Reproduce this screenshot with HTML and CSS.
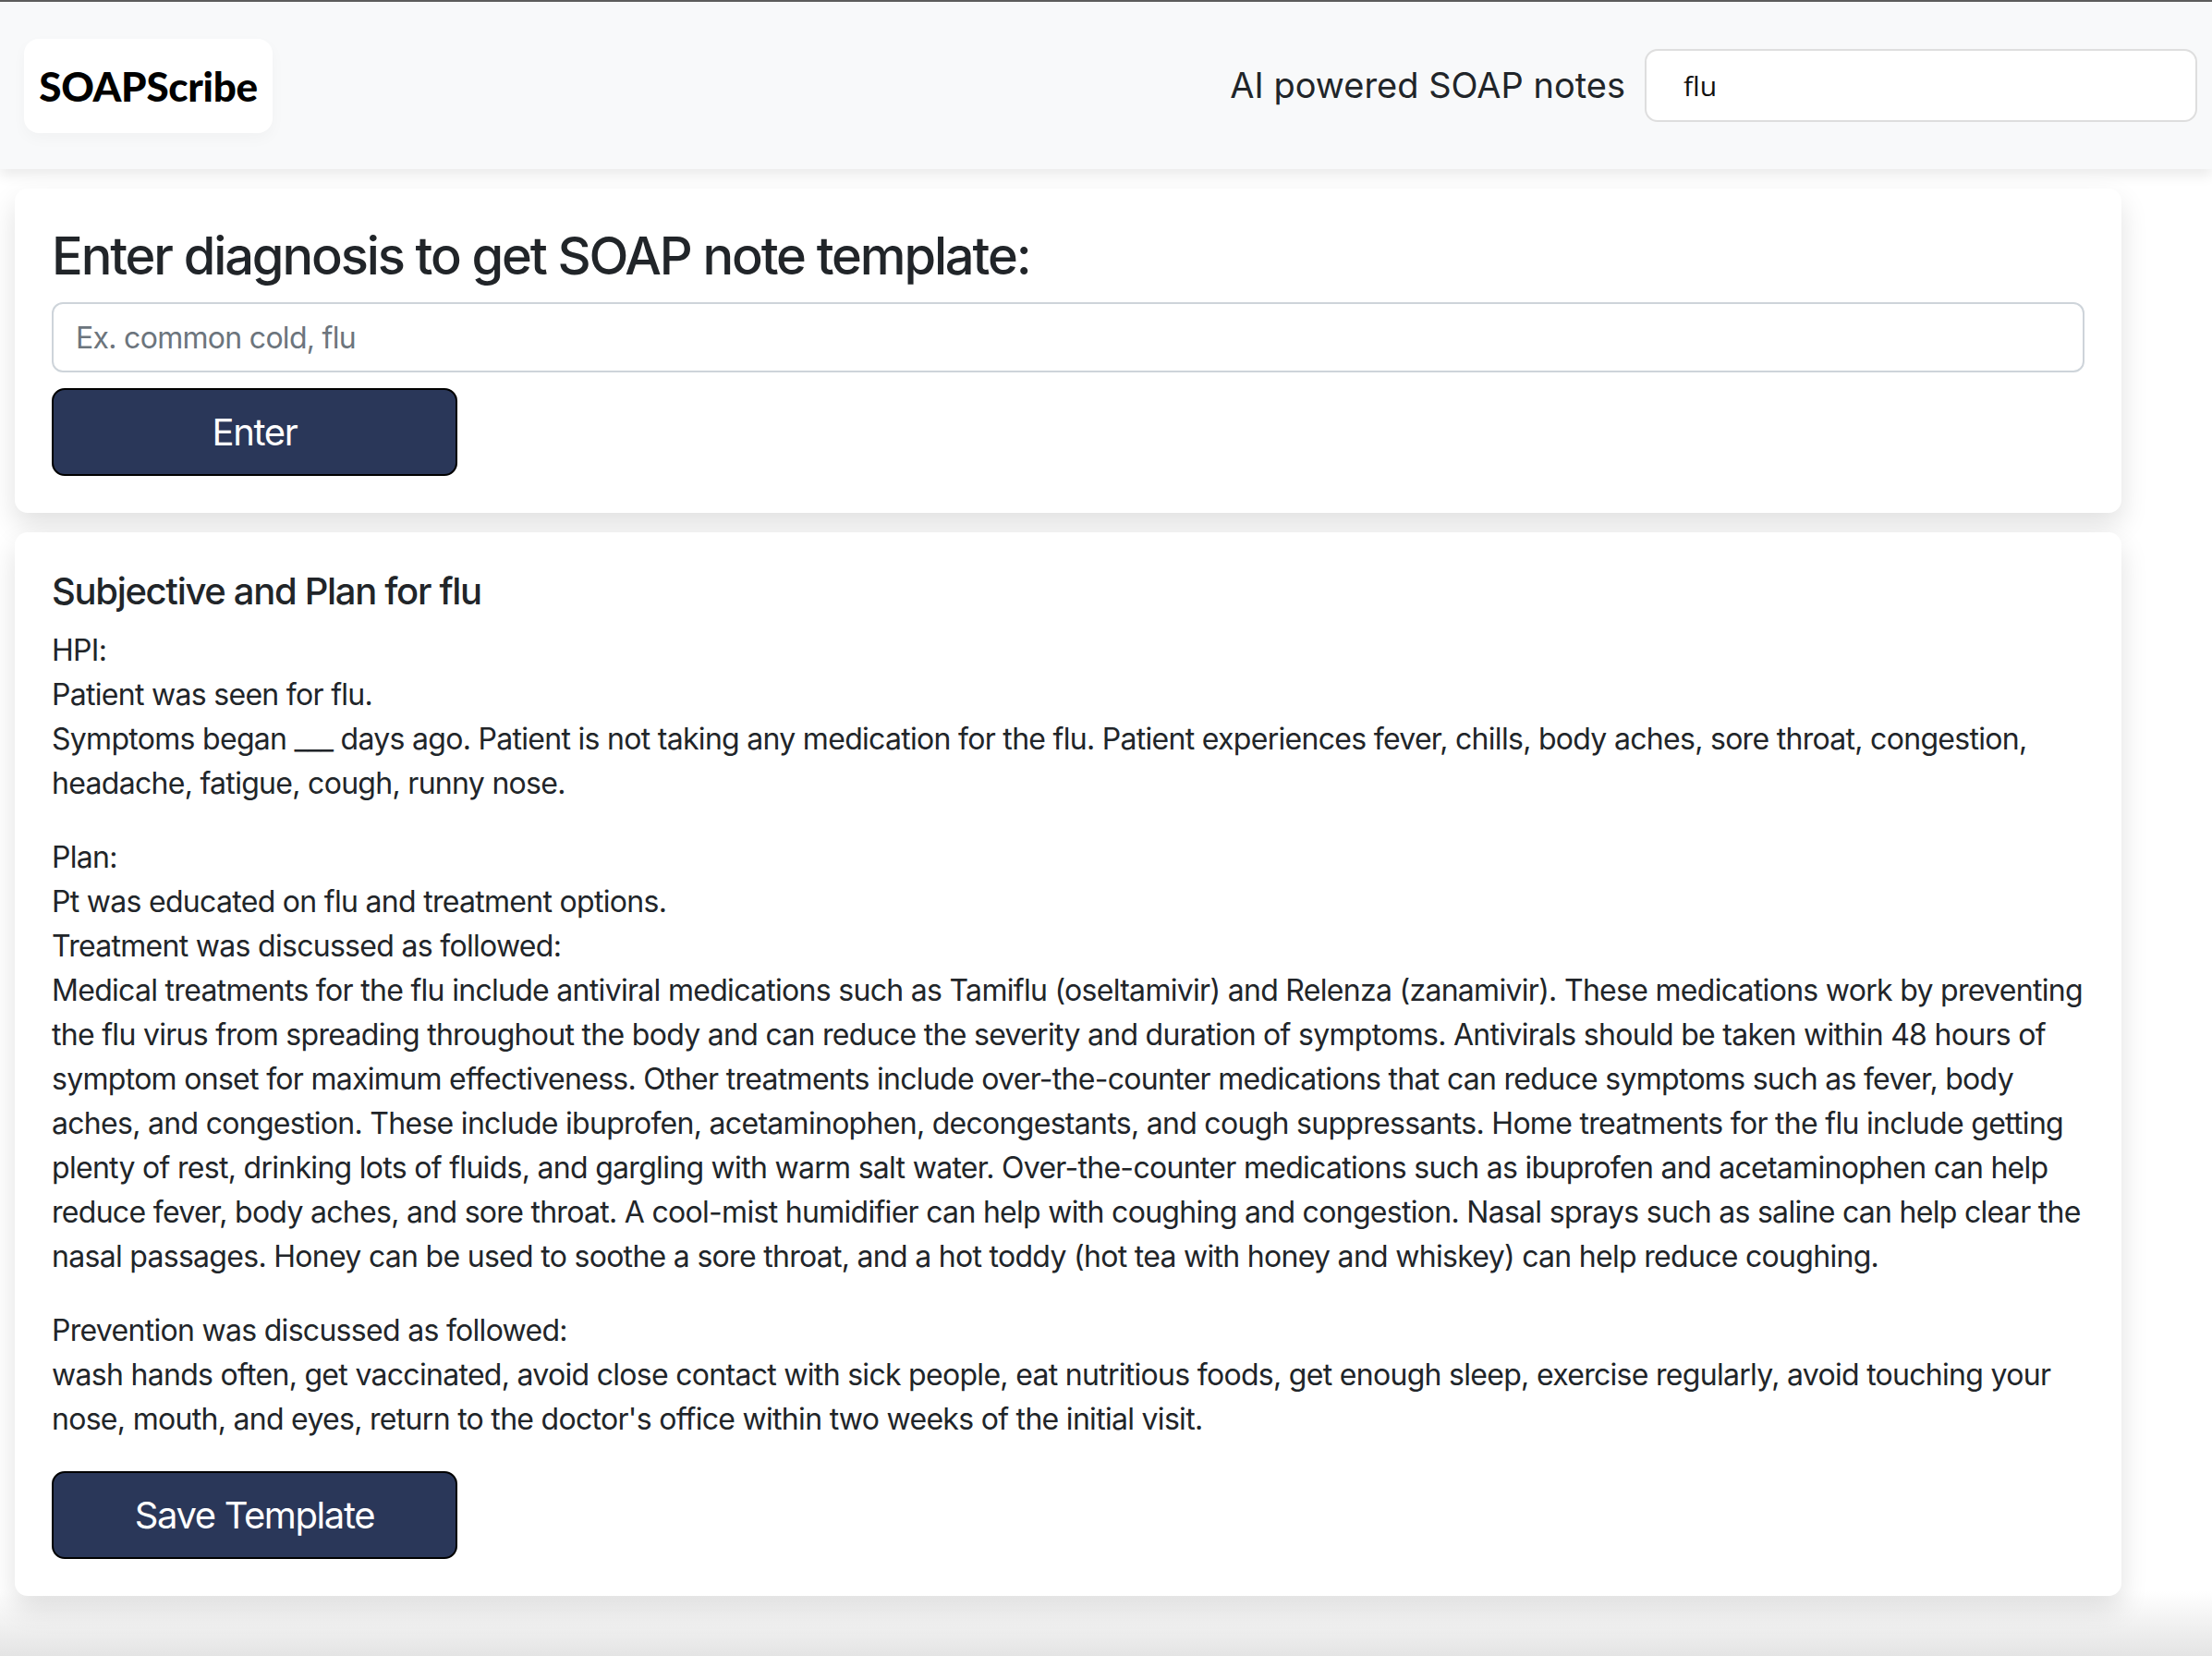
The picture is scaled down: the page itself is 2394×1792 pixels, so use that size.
FILE: index.html
```html
<!DOCTYPE html>
<html lang="en">
<head>
<meta charset="utf-8">
<title>SOAPScribe</title>
<link rel="stylesheet" href="styles.css">
</head>
<body>
<nav class="navbar">
  <div class="brand">SOAPScribe</div>
  <div class="nav-right">
    <span class="tagline">AI powered SOAP notes</span>
    <input class="nav-search" type="text" value="flu">
  </div>
</nav>
<main class="main">
  <section class="card">
    <h3 class="card-title-lg">Enter diagnosis to get SOAP note template:</h3>
    <input class="form-control" type="text" placeholder="Ex. common cold, flu">
    <button class="btn">Enter</button>
  </section>
  <section class="card">
    <h5 class="card-title">Subjective and Plan for flu</h5>
    <p>HPI:<br>Patient was seen for flu.<br>Symptoms began ___ days ago. Patient is not taking any medication for the flu. Patient experiences fever, chills, body aches, sore throat, congestion, headache, fatigue, cough, runny nose.</p>
    <p>Plan:<br>Pt was educated on flu and treatment options.<br>Treatment was discussed as followed:<br>Medical treatments for the flu include antiviral medications such as Tamiflu (oseltamivir) and Relenza (zanamivir). These medications work by preventing the flu virus from spreading throughout the body and can reduce the severity and duration of symptoms. Antivirals should be taken within 48 hours of symptom onset for maximum effectiveness. Other treatments include over-the-counter medications that can reduce symptoms such as fever, body aches, and congestion. These include ibuprofen, acetaminophen, decongestants, and cough suppressants. Home treatments for the flu include getting plenty of rest, drinking lots of fluids, and gargling with warm salt water. Over-the-counter medications such as ibuprofen and acetaminophen can help reduce fever, body aches, and sore throat. A cool-mist humidifier can help with coughing and congestion. Nasal sprays such as saline can help clear the nasal passages. Honey can be used to soothe a sore throat, and a hot toddy (hot tea with honey and whiskey) can help reduce coughing.</p>
    <p>Prevention was discussed as followed:<br>wash hands often, get vaccinated, avoid close contact with sick people, eat nutritious foods, get enough sleep, exercise regularly, avoid touching your nose, mouth, and eyes, return to the doctor's office within two weeks of the initial visit.</p>
    <button class="btn">Save Template</button>
  </section>
</main>
</body>
</html>
```

FILE: styles.css
```css
html {
  height: 100%;
}

body {
  margin: 0;
  min-height: 100%;
  font-family: Inter, "Noto Sans", "Liberation Sans", sans-serif;
  font-size: 32px;
  line-height: 1.5;
  letter-spacing: -0.022em;
  color: #212529;
  background: linear-gradient(to bottom, #ffffff 0, #ffffff calc(100% - 70px), #f3f3f3 calc(100% - 40px), #e4e4e4 100%);
}

.navbar {
  box-sizing: border-box;
  height: 183px;
  border-top: 2px solid #5c5c5c;
  background: #f8f9fa;
  display: flex;
  align-items: center;
  justify-content: space-between;
  padding: 0 16px 0 26px;
  box-shadow: 0 6px 14px rgba(0, 0, 0, 0.09);
  position: relative;
  z-index: 2;
}

.brand {
  width: 269px;
  height: 102px;
  background: #ffffff;
  border-radius: 16px;
  box-shadow: 0 6px 16px rgba(0, 0, 0, 0.03);
  display: flex;
  align-items: center;
  justify-content: center;
  font-family: Lato, "Liberation Sans", sans-serif;
  font-weight: 900;
  font-size: 44px;
  color: #000000;
  letter-spacing: -0.3px;
}

.nav-right {
  display: flex;
  align-items: center;
  gap: 21px;
}

.tagline {
  font-size: 38px;
  letter-spacing: 0;
  color: #212529;
}

.nav-search {
  box-sizing: border-box;
  width: 598px;
  height: 79px;
  border: 2px solid #dedede;
  border-radius: 14px;
  background: #ffffff;
  padding: 0 40px;
  font-family: "Open Sans", "Liberation Sans", sans-serif;
  font-size: 30px;
  letter-spacing: 0;
  color: #111111;
  outline: none;
}

.main {
  margin: 0 98px 0 16px;
  padding: 21px 0 0;
  display: flex;
  flex-direction: column;
  gap: 21px;
}

.card {
  background: #ffffff;
  border-radius: 14px;
  box-shadow: 0 14px 30px rgba(0, 0, 0, 0.12);
  padding: 40px;
}

.card-title-lg {
  margin: 0 0 16px;
  font-size: 56px;
  font-weight: 500;
  line-height: 1.2;
  letter-spacing: -0.038em;
}

.card-title {
  margin: 0 0 16px;
  font-size: 40px;
  font-weight: 500;
  line-height: 1.2;
  letter-spacing: -0.033em;
}

.card p {
  margin: 0 0 32px;
}

.form-control {
  display: block;
  box-sizing: border-box;
  width: 100%;
  height: 76px;
  margin: 0 0 17px;
  padding: 0 24px;
  border: 2px solid #ced4da;
  border-radius: 12px;
  font-family: inherit;
  font-size: 32px;
  letter-spacing: -0.022em;
  color: #212529;
  outline: none;
}

.form-control::placeholder {
  color: #6c757d;
}

.btn {
  display: block;
  box-sizing: border-box;
  width: 439px;
  height: 95px;
  background: #2a3759;
  color: #ffffff;
  border: 2px solid #000000;
  border-radius: 14px;
  font-family: inherit;
  font-size: 40px;
  letter-spacing: -0.035em;
  cursor: pointer;
}
```
